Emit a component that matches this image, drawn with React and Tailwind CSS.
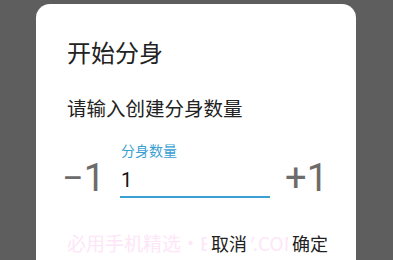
export default function App() {
  return (
    <div
      className="w-[393px] h-[260px] overflow-hidden bg-[#5e5e5e] pt-[4px] pl-[36px]"
      style={{ fontFamily: '"Noto Sans CJK SC", Roboto, sans-serif' }}
    >
      <div className="relative w-[320px] h-[280px] bg-white rounded-[14px] pl-[31px] pr-[28px]">
        <div className="pt-[32px] text-[24px] leading-[32px] text-[#222]">开始分身</div>
        <div className="mt-[26px] text-[19.5px] leading-[28px] text-[#222]">请输入创建分身数量</div>
        <div className="mt-[18px] flex items-end pb-[4px]">
          <div className="-ml-[5px] w-[59px] text-[38px] leading-[40px] text-[#6c6c6c]" style={{ fontFamily: 'Roboto, sans-serif' }}>
            −1
          </div>
          <div className="w-[150px] -ml-[1px]">
            <div className="pl-[1px] text-[14px] leading-[20px] text-[#3a9fd2]">分身数量</div>
            <div className="mt-[8px] text-[20px] leading-[24px] text-[#111] pl-[1px]" style={{ fontFamily: 'Roboto, sans-serif' }}>1</div>
            <div className="mt-[4px] h-[2px] bg-[#3a9fd2]"></div>
          </div>
          <div className="flex-1 text-right text-[38px] leading-[40px] text-[#6c6c6c]" style={{ fontFamily: 'Roboto, sans-serif' }}>
            +1
          </div>
        </div>
        <div className="relative mt-[29px] -mr-[4px] flex justify-end gap-[37px] text-[18px] leading-[24px] text-[#222]">
          <div className="absolute left-0 top-0 text-[19px] text-[#fde6f7] whitespace-nowrap">必用手机精选・BIYIXY.COM</div>
          <span className="relative bg-white px-[4px]">取消</span>
          <span className="relative bg-white px-[4px]">确定</span>
        </div>
      </div>
    </div>
  );
}
